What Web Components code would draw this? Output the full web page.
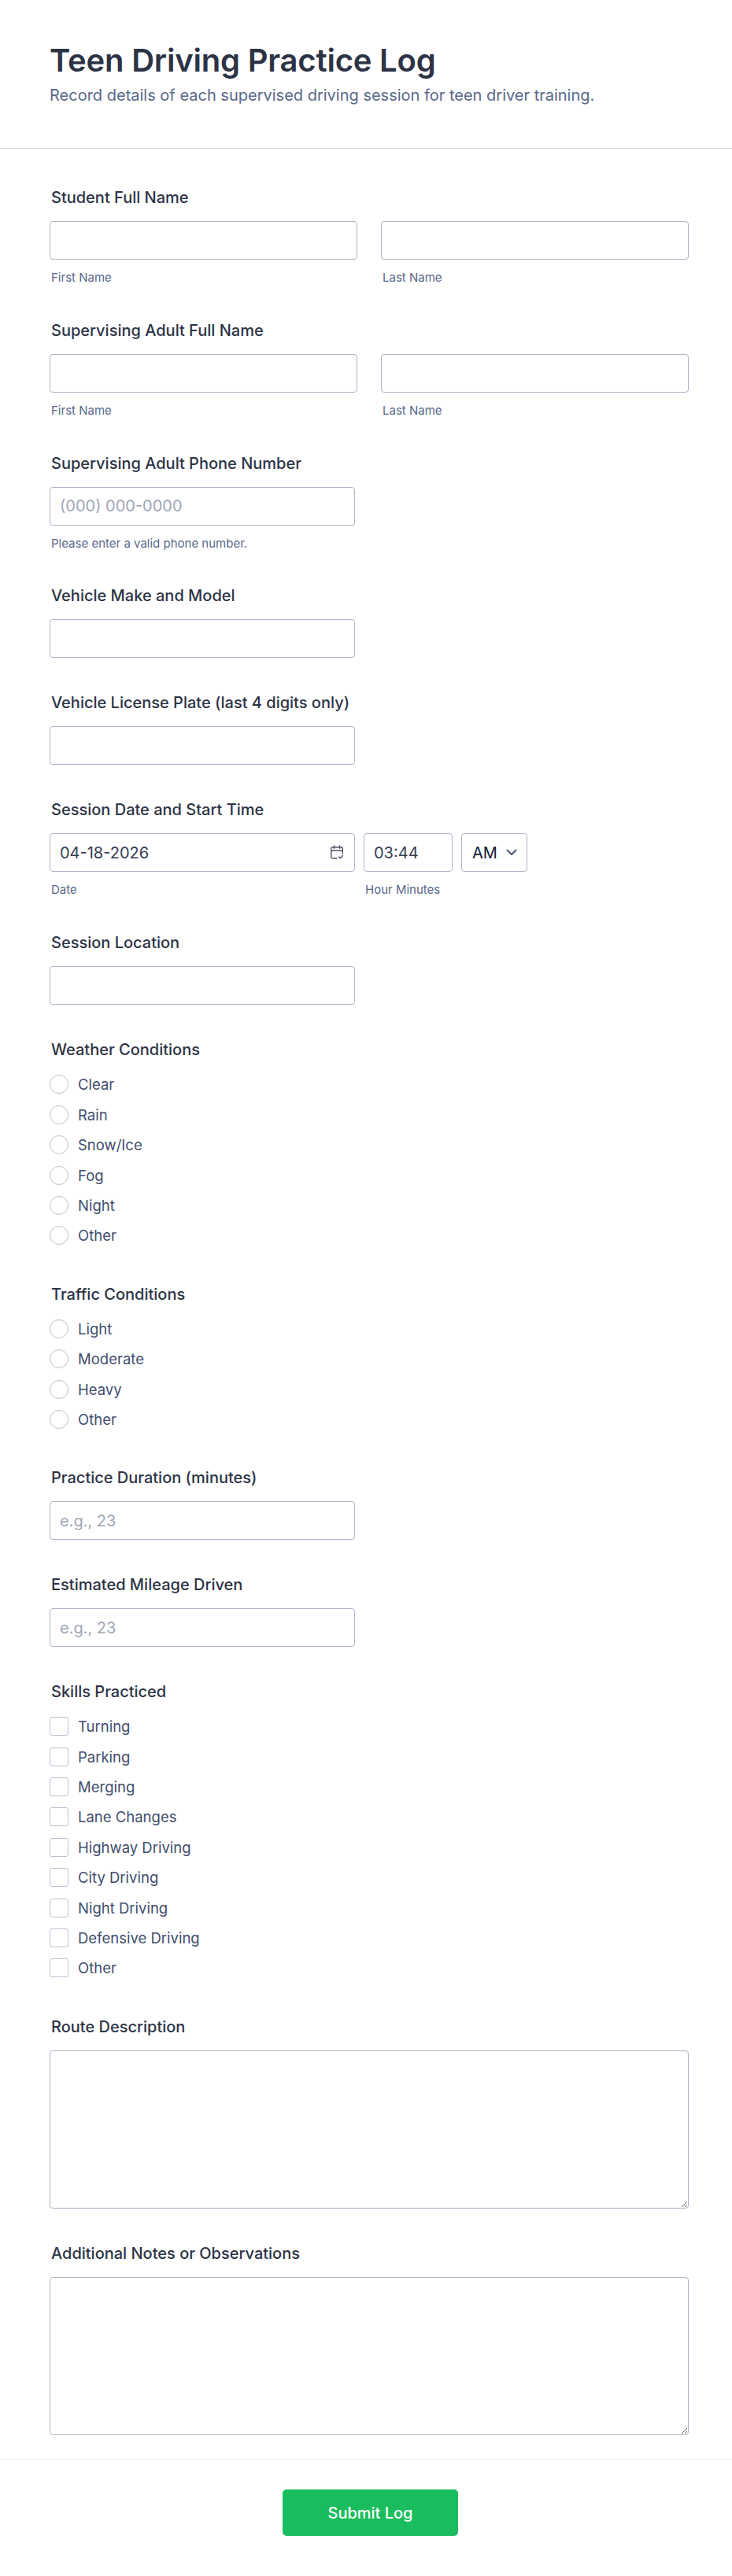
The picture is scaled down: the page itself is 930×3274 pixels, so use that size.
<!DOCTYPE html>
<html>
<head>
<meta charset="utf-8">
<title>Teen Driving Practice Log</title>
<style>
  html, body { margin: 0; background: #fff; }
  body { font-family: Inter, "Liberation Sans", sans-serif; color: #2c3345; }
</style>
</head>
<body>
<form-page>
  <form-header slot="header" heading="Teen Driving Practice Log" sub="Record details of each supervised driving session for teen driver training."></form-header>

  <form-field label="Student Full Name">
    <name-row></name-row>
  </form-field>
  <form-field label="Supervising Adult Full Name">
    <name-row></name-row>
  </form-field>
  <form-field label="Supervising Adult Phone Number">
    <text-box placeholder="(000) 000-0000" hint="Please enter a valid phone number."></text-box>
  </form-field>
  <form-field label="Vehicle Make and Model"><text-box></text-box></form-field>
  <form-field label="Vehicle License Plate (last 4 digits only)"><text-box></text-box></form-field>
  <form-field label="Session Date and Start Time">
    <date-time-row date="04-18-2026" time="03:44" ampm="AM"></date-time-row>
  </form-field>
  <form-field label="Session Location"><text-box></text-box></form-field>
  <form-field label="Weather Conditions">
    <choice-list type="radio" items="Clear|Rain|Snow/Ice|Fog|Night|Other"></choice-list>
  </form-field>
  <form-field label="Traffic Conditions">
    <choice-list type="radio" items="Light|Moderate|Heavy|Other"></choice-list>
  </form-field>
  <form-field label="Practice Duration (minutes)"><text-box placeholder="e.g., 23"></text-box></form-field>
  <form-field label="Estimated Mileage Driven"><text-box placeholder="e.g., 23"></text-box></form-field>
  <form-field label="Skills Practiced">
    <choice-list type="checkbox" items="Turning|Parking|Merging|Lane Changes|Highway Driving|City Driving|Night Driving|Defensive Driving|Other"></choice-list>
  </form-field>
  <form-field label="Route Description"><long-box></long-box></form-field>
  <form-field label="Additional Notes or Observations" last><long-box></long-box></form-field>

  <submit-bar slot="footer" text="Submit Log"></submit-bar>
</form-page>

<script>
const fieldBox = `
  input, textarea {
    box-sizing: border-box;
    display: block;
    width: 100%;
    height: 49px;
    margin: 0;
    padding: 0 12px;
    border: 1px solid #aeb4c6;
    border-radius: 4px;
    background: #fff;
    font: 400 20px Inter, "Liberation Sans", sans-serif;
    color: #343c52;
    outline: none;
  }
  input::placeholder { color: #a0a6b6; opacity: 1; }
`;
const subLabel = `
  .sub {
    margin: 14px 0 0 2px;
    font-size: 15px;
    line-height: 18.8px;
    color: #57688a;
  }
`;

class FormPage extends HTMLElement {
  constructor() {
    super();
    this.attachShadow({ mode: 'open' });
    this.shadowRoot.innerHTML = `
      <style>
        :host { display: block; width: 930px; }
        .fields { padding: 50px 55px 0 63px; }
      </style>
      <slot name="header"></slot>
      <div class="fields"><slot></slot></div>
      <slot name="footer"></slot>
    `;
  }
}
customElements.define('form-page', FormPage);

class FormHeader extends HTMLElement {
  constructor() {
    super();
    this.attachShadow({ mode: 'open' });
    this.shadowRoot.innerHTML = `
      <style>
        :host {
          display: block;
          box-sizing: border-box;
          height: 189px;
          padding: 49px 63px 0;
          border-bottom: 1px solid #d8dce7;
        }
        h1 {
          margin: 0;
          font-size: 40px;
          line-height: 56px;
          font-weight: 600;
          letter-spacing: -0.2px;
          color: #2c3345;
        }
        p {
          margin: 3px 0 0;
          font-size: 20px;
          line-height: 26px;
          font-weight: 400;
          color: #57688a;
        }
      </style>
      <h1>${this.getAttribute('heading')}</h1>
      <p>${this.getAttribute('sub')}</p>
    `;
  }
}
customElements.define('form-header', FormHeader);

class FormField extends HTMLElement {
  constructor() {
    super();
    this.attachShadow({ mode: 'open' });
    this.shadowRoot.innerHTML = `
      <style>
        :host { display: block; margin-bottom: 45px; }
        :host([last]) { margin-bottom: 0; }
        label {
          display: block;
          margin: 0 0 17px 2px;
          font-size: 20px;
          line-height: 25px;
          font-weight: 500;
          color: #2c3345;
        }
      </style>
      <label>${this.getAttribute('label')}</label>
      <slot></slot>
    `;
  }
}
customElements.define('form-field', FormField);

class TextBox extends HTMLElement {
  constructor() {
    super();
    this.attachShadow({ mode: 'open' });
    const ph = this.getAttribute('placeholder') || '';
    const hint = this.getAttribute('hint');
    this.shadowRoot.innerHTML = `
      <style>
        :host { display: block; width: 388px; }
        ${fieldBox}
        ${subLabel}
      </style>
      <input type="text" placeholder="${ph}">
      ${hint ? `<div class="sub">${hint}</div>` : ''}
    `;
  }
}
customElements.define('text-box', TextBox);

class NameRow extends HTMLElement {
  constructor() {
    super();
    this.attachShadow({ mode: 'open' });
    this.shadowRoot.innerHTML = `
      <style>
        :host { display: grid; grid-template-columns: 391px 391px; column-gap: 30px; }
        ${fieldBox}
        ${subLabel}
      </style>
      <div><input type="text"><div class="sub">First Name</div></div>
      <div><input type="text"><div class="sub">Last Name</div></div>
    `;
  }
}
customElements.define('name-row', NameRow);

class DateTimeRow extends HTMLElement {
  constructor() {
    super();
    this.attachShadow({ mode: 'open' });
    this.shadowRoot.innerHTML = `
      <style>
        :host { display: flex; gap: 11px; align-items: flex-start; }
        ${fieldBox}
        ${subLabel}
        .date { width: 388px; position: relative; }
        .time { width: 113px; }
        .date svg { position: absolute; right: 14px; top: 15px; }
        .ampm {
          box-sizing: border-box;
          width: 84px;
          height: 49px;
          padding: 0 12px 0 13px;
          display: flex;
          align-items: center;
          justify-content: space-between;
          border: 1px solid #aeb4c6;
          border-radius: 4px;
          font-size: 20px;
          color: #0b1a36;
        }
      </style>
      <div class="date">
        <input type="text" value="${this.getAttribute('date')}">
        <svg width="18" height="19" viewBox="0 0 18 19" fill="none" stroke="#4a4f5e" stroke-width="1.4" stroke-linecap="round" stroke-linejoin="round">
          <path d="M9 16.8H3.5A1.8 1.8 0 0 1 1.7 15V4.6a1.8 1.8 0 0 1 1.8-1.8h11a1.8 1.8 0 0 1 1.8 1.8V11"/>
          <path d="M1.7 7h14.6M5.5 1v3.2M12.5 1v3.2M11.6 15l1.8 1.8 3-3.2"/>
        </svg>
        <div class="sub">Date</div>
      </div>
      <div class="time">
        <input type="text" value="${this.getAttribute('time')}">
        <div class="sub">Hour Minutes</div>
      </div>
      <div class="ampm">
        <span>${this.getAttribute('ampm')}</span>
        <svg width="14" height="9" viewBox="0 0 14 9" fill="none" stroke="#4a5470" stroke-width="2" stroke-linecap="round" stroke-linejoin="round"><path d="M1.5 1.5 7 7l5.5-5.5"/></svg>
      </div>
    `;
  }
}
customElements.define('date-time-row', DateTimeRow);

class ChoiceList extends HTMLElement {
  constructor() {
    super();
    this.attachShadow({ mode: 'open' });
    const kind = this.getAttribute('type');
    const rows = this.getAttribute('items').split('|').map(t => `
      <div class="row"><span class="mark ${kind}"></span><span>${t}</span></div>`).join('');
    this.shadowRoot.innerHTML = `
      <style>
        :host { display: block; margin: -5px 0 -2px; }
        :host([type="checkbox"]) { margin-bottom: -1.5px; }
        .row {
          display: flex;
          align-items: center;
          gap: 12px;
          height: 38.4px;
          font-size: 18.5px;
          color: #3f4d6d;
        }
        .mark {
          box-sizing: border-box;
          width: 24px;
          height: 24px;
          border: 1px solid #bcc1d1;
          background: #fff;
        }
        .radio { border-radius: 50%; }
        .checkbox { border-radius: 3px; }
      </style>
      ${rows}
    `;
  }
}
customElements.define('choice-list', ChoiceList);

class LongBox extends HTMLElement {
  constructor() {
    super();
    this.attachShadow({ mode: 'open' });
    this.shadowRoot.innerHTML = `
      <style>
        :host { display: block; }
        ${fieldBox}
        textarea { height: 201px; padding: 12px; resize: vertical; }
      </style>
      <textarea></textarea>
    `;
  }
}
customElements.define('long-box', LongBox);

class SubmitBar extends HTMLElement {
  constructor() {
    super();
    this.attachShadow({ mode: 'open' });
    this.shadowRoot.innerHTML = `
      <style>
        :host {
          display: flex;
          justify-content: center;
          margin-top: 30px;
          padding: 38px 0 50px 11px;
          border-top: 1px solid #eceef3;
        }
        button {
          width: 223px;
          height: 59px;
          border: 0;
          border-radius: 5px;
          background: #1abd5d;
          color: #fff;
          font: 500 20px Inter, "Liberation Sans", sans-serif;
        }
      </style>
      <button type="button">${this.getAttribute('text')}</button>
    `;
  }
}
customElements.define('submit-bar', SubmitBar);
</script>
</body>
</html>
